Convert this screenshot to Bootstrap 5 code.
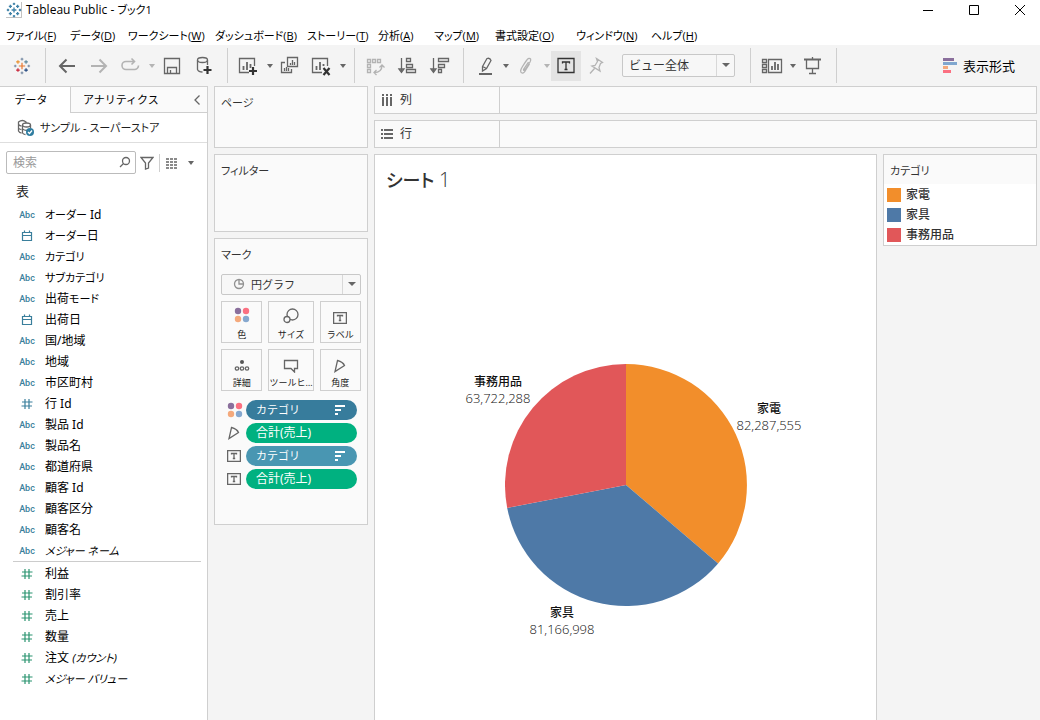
<!DOCTYPE html>
<html lang="ja">
<head>
<meta charset="utf-8">
<meta name="viewport" content="width=device-width, initial-scale=1">
<title>Tableau Public - ブック1</title>
<link href="https://cdn.jsdelivr.net/npm/bootstrap@5.3.0/dist/css/bootstrap.min.css" rel="stylesheet">
<style>
  body { font: 12px/18px "Noto Sans", "Noto Sans CJK JP", sans-serif; font-feature-settings: "palt"; color: #1e1e1e; background: #f4f4f4; }
  svg { display: block; flex: none; }
  .ic { fill: none; stroke: #666; stroke-width: 1.3; }
  .ic .solid { fill: #555; stroke: none; }
  .faded { opacity: .45; }
  button, .btn { font-size: 12px; line-height: 18px; }
  .plain { padding: 0; border: 0; border-radius: 0; background: none; color: inherit; }
  .kana, .plain.kana { font-size: 11px; }

  .titlebar { height: 20px; font-family: "Open Sans", "Noto Sans CJK JP", sans-serif; color: #000; padding-left: 6px; }
  .win-btns { gap: 14px; padding-right: 4px; }
  .menubar { display: grid; grid-template-columns: 64px 58px 87px 92px 71px 56px 61px 81px 75px auto; padding: 7px 0 0 6px; height: 25px; font-family: "Open Sans", "Noto Sans CJK JP", sans-serif; font-size: 11px; }
  .menubar a { color: #000; text-decoration: none; white-space: nowrap; }

  .toolbar { height: 41px; padding: 0 25px 0 6px; }
  .tool { width: 32px; height: 30px; display: flex; align-items: center; justify-content: center; }
  .tool.active-tool { width: 30px; background: #e4e4e4; }
  .active-tool .ic { stroke: #333; }
  .drop { width: 9px; height: 30px; display: flex; align-items: center; justify-content: center; }
  .drop::before, .pick::after { content: ""; border: 3px solid transparent; border-top: 4px solid #666; border-bottom: 0; }
  .vsep { width: 1px; height: 35px; background: #cfcfcf; margin: 0 5px 0 7px; }
  .fit { width: 113px; margin: 0 8px 0 9px; }
  .show-me { font-size: 13px; gap: 6px; }

  .pick { position: relative; }
  .pick::after { position: absolute; right: 5px; top: 9px; border-left-width: 4px; border-right-width: 4px; }
  .pick select { appearance: none; width: 100%; height: 23px; padding: 0 24px 0 6px; color: #333; border: 1px solid #c8c8c8; border-radius: 2px; background: linear-gradient(#d8d8d8, #d8d8d8) right 17px center / 1px 100% no-repeat #f7f7f7; font-size: 12px; line-height: 20px; }
  .pick.mark-pick select { height: 21px; padding-left: 29px; font-size: 11px; }
  .pick.mark-pick::after { top: 8px; }
  .pick svg { position: absolute; left: 12px; top: 4px; opacity: .7; }

  .data-pane { width: 208px; border: solid #cfcfcf; border-width: 1px 1px 0 0; background: #fff; }
  .pane-tabs { height: 26px; }
  .pane-tabs .tab-on { width: 70px; }
  .pane-tabs .tab-off { background: #fafafa; border: solid #cfcfcf; border-width: 0 0 1px 1px; padding: 0 6px 0 12px; }
  .source { height: 30px; padding: 0 17px; border-bottom: 1px solid #dedede; gap: 5px; }
  .search-row { margin: 8px 6px; height: 23px; }
  .search-box { width: 130px; position: relative; }
  .search-box input { height: 23px; min-height: 0; padding: 0 24px 0 6px; font-size: 12px; border: 1px solid #bbb; border-radius: 2px; }
  .search-box input::placeholder { color: #999; }
  .search-box svg { position: absolute; right: 5px; top: 5px; }
  .search-sep { width: 1px; height: 18px; background: #cfcfcf; margin: 0 6px 0 5px; }
  .table-name { font-size: 13px; padding: 0 16px; height: 22px; line-height: 18px; margin: 0; font-weight: 400; }
  .fields { margin: 0; padding: 0; list-style: none; color: #000; }
  .fields li { height: 21px; display: flex; align-items: center; }
  .fields li > :first-child { width: 26px; margin: 0 5px 0 14px; text-align: center; color: #3a7f9c; }
  .fields .abc { font: 500 9px/18px Roboto, sans-serif; }
  .fields.measures > li > :first-child { color: #2b9470; }
  .fields svg { stroke: currentColor; fill: none; stroke-width: 1.2; }
  .field-line { margin: 0 6px 1px 13px; border-top: 1px solid #ccc; opacity: 1; }

  .shelves { width: 154px; margin: 0 6px; gap: 6px; }
  .panel-box { background: #fafafa; border: 1px solid #cfcfcf; color: #333; }
  .shelf-box { padding: 7px 6px; font-size: 11px; }
  .h-pages { height: 62px; } .h-filters { height: 78px; } .h-marks { min-height: 287px; }
  .marks-title { margin-bottom: 10px; }
  .mark-grid { display: grid; grid-template-columns: repeat(3, 1fr); gap: 6px; margin: 6px 0 9px; }
  .mark-btn { height: 42px; border: 1px solid #cfcfcf; display: flex; flex-direction: column; align-items: center; justify-content: space-between; padding: 5px 0 0; font-size: 9px; line-height: 14px; white-space: nowrap; background: #fafafa; color: #222; border-radius: 0; }
  .pill-row { display: grid; grid-template-columns: 25px 1fr; align-items: center; height: 20px; margin: 0 4px 3px 0; }
  .pill-row > svg { margin-left: 6px; }
  .pill { height: 20px; border-radius: 10px; color: #fff; padding: 0 11px 0 10px; display: flex; align-items: center; justify-content: space-between; border: 0; line-height: 20px; }
  .pill.kana { font-size: 11px; }
  .pill-dark { background: #377c9c; } .pill-mid { background: #4996b2; } .pill-green { background: #00b180; }

  .work { gap: 6px; margin-right: 3px; }
  .axis-shelf { height: 28px; }
  .axis-name { width: 125px; border-right: 1px solid #cfcfcf; padding-left: 6px; gap: 7px; }
  .view-row { gap: 6px; }
  .sheet { background: #fff; border: 1px solid #cfcfcf; border-bottom: 0; }
  .sheet-title { font-size: 18px; line-height: 28px; font-weight: 500; margin: 11px 11px 170px; color: #333; }
  .sheet-title span { font: 300 20px/28px "Open Sans", sans-serif; }
  .pie { position: relative; width: 242px; margin: 0 auto; color: #111; }
  .pie-label { position: absolute; text-align: center; line-height: 17px; font-size: 12px; font-weight: 500; white-space: nowrap; }
  .pie-label span { display: block; font: 300 13px/17px "Open Sans", sans-serif; }
  .at-tv { left: 232px; top: 36px; } .at-furn { left: 25px; top: 240px; } .at-office { left: -39px; top: 9px; }
  .legend { width: 154px; }
  .legend h2 { font-size: 11px; line-height: 18px; font-weight: 400; margin: 0; padding: 7px 6px 5px; height: 29px; }
  .legend ul { background: #fff; margin: 0; padding: 1px 3px 0; list-style: none; }
  .legend li { height: 20px; display: flex; align-items: center; gap: 5px; font-weight: 500; }
  .swatch { width: 14px; height: 14px; }
  .sw-o { background: #f28e2b; } .sw-b { background: #4e79a7; } .sw-r { background: #e15759; }
</style>
<script src="https://cdn.jsdelivr.net/npm/bootstrap@5.3.0/dist/js/bootstrap.bundle.min.js"></script>
</head>
<body class="d-flex flex-column min-vh-100">
<svg width="0" height="0" class="position-absolute" aria-hidden="true">
  <symbol id="cal" viewBox="0 0 12 12"><path d="M1.500 2.500h9v8h-9zM1.500 5.500h9M3.500 .5v2M8.500 .5v2"/></symbol>
  <symbol id="num" viewBox="0 0 12 12"><path d="M4 1v10M8 1v10M1 4h10.500M.5 8h10.500"/></symbol>
  <symbol id="dots" viewBox="0 0 16 16"><g stroke="none"><circle cx="4" cy="4" r="3.200" fill="#8a6f9c"/><circle cx="12" cy="4" r="3.200" fill="#fb7081"/><circle cx="4" cy="12" r="3.200" fill="#f4a97c"/><circle cx="12" cy="12" r="3.200" fill="#86a8cf"/></g></symbol>
  <symbol id="tbox" viewBox="0 0 14 14"><path d="M.6 1.600h12.800v10.800H.6zM4.500 5.500v-1h5v1M7 4.500v5M5.800 9.500h2.400"/></symbol>
  <symbol id="angle" viewBox="0 0 14 14"><path d="M4.500 1.500Q10 3 11.500 6.500L2 12.500Z"/></symbol>
  <symbol id="sort" viewBox="0 0 12 12"><path d="M1 2h10M1 6h6M1 10h3" stroke="#fff" stroke-width="2"/></symbol>
  <symbol id="spark" viewBox="0 0 20 20"><path d="M10 7v6M7 10h6M5.500 3.500v4M3.500 5.500h4M14.500 3.500v4M12.500 5.500h4M5.500 12.500v4M3.500 14.500h4M14.500 12.500v4M12.500 14.500h4M10 .8v3M8.500 2.300h3M10 16.200v3M8.500 17.700h3M1 10h3M2.500 8.500v3M16 10h3M17.500 8.500v3"/></symbol>
</svg>

<header class="bg-white">
  <div class="titlebar d-flex align-items-center">
    <svg width="16" height="16" viewBox="0 0 20 20" fill="none" stroke="#3f82a8" stroke-width="1.700"><path d="M0 19.500h19.500V0" stroke="#aaa" stroke-width="1"/><use href="#spark"/></svg>
    <span class="ms-1">Tableau Public - <span class="kana">ブック1</span></span>
    <div class="win-btns d-flex ms-auto">
      <button class="plain tool" aria-label="最小化"><svg width="12" height="12" stroke="#000"><path d="M1 6.500h10"/></svg></button>
      <button class="plain tool" aria-label="最大化"><svg width="12" height="12" stroke="#000" fill="none"><path d="M1.500 1.500h9v9h-9z"/></svg></button>
      <button class="plain tool" aria-label="閉じる"><svg width="12" height="12" stroke="#000"><path d="M1 1l10 10M11 1 1 11"/></svg></button>
    </div>
  </div>
  <nav class="menubar">
    <a href="#">ファイル(<u>F</u>)</a><a href="#">データ(<u>D</u>)</a><a href="#">ワークシート(<u>W</u>)</a><a href="#">ダッシュボード(<u>B</u>)</a><a href="#">ストーリー(<u>T</u>)</a><a href="#">分析(<u>A</u>)</a><a href="#">マップ(<u>M</u>)</a><a href="#">書式設定(<u>O</u>)</a><a href="#">ウィンドウ(<u>N</u>)</a><a href="#">ヘルプ(<u>H</u>)</a>
  </nav>
</header>

<div class="toolbar d-flex align-items-center" role="toolbar" aria-label="ツールバー">
  <button class="plain tool" aria-label="スタート"><svg width="18" height="18" viewBox="0 0 20 20" fill="none" stroke-width="1.300"><path d="M10 6.500v7M6.500 10h7" stroke="#e8762d"/><path d="M5.500 3.500v4M3.500 5.500h4" stroke="#eb912c"/><path d="M14.500 3.500v4M12.500 5.500h4" stroke="#59879b"/><path d="M5.500 12.500v4M3.500 14.500h4" stroke="#c72035"/><path d="M14.500 12.500v4M12.500 14.500h4" stroke="#1f457e"/><path d="M10 .8v3M8.500 2.300h3M10 16.200v3M8.500 17.700h3M1 10h3M2.500 8.500v3M16 10h3M17.500 8.500v3" stroke="#7b8fa8"/></svg></button>
  <span class="vsep"></span>
  <button class="plain tool" aria-label="元に戻す"><svg class="ic" width="24" height="24"><path d="M20 12H5M11.500 5.500 5 12l6.500 6.500" stroke-width="2"/></svg></button>
  <button class="plain tool faded" aria-label="やり直す"><svg class="ic" width="24" height="24"><path d="M4 12h15M12.500 5.500 19 12l-6.500 6.500" stroke-width="2"/></svg></button>
  <button class="plain tool faded" aria-label="再生"><svg class="ic" width="24" height="24"><path d="M15 7.500H7a4 4 0 0 0 0 8h8a4 4 0 0 0 4.500-4M12.500 4.500l3 3-3 3" stroke-width="1.600"/></svg></button>
  <span class="drop faded"></span>
  <button class="plain tool" aria-label="保存"><svg class="ic" width="24" height="24"><path d="M4.500 4.500h15v15h-15zM7.500 19.500v-6h9v6M10.500 19v-3"/></svg></button>
  <button class="plain tool" aria-label="新しいデータ ソース"><svg class="ic" width="24" height="24"><ellipse cx="10.500" cy="6" rx="5" ry="2.500"/><path d="M5.500 6v9.500q1 2.500 5 2.500M15.500 6v5"/><path d="M15.500 12v8M11.500 16h8" stroke="#333" stroke-width="2.200"/></svg></button>
  <span class="vsep"></span>
  <button class="plain tool" aria-label="新しいワークシート"><svg class="ic" width="24" height="24"><path d="M12 18.500H2.500v-14h15V12"/><path d="M6.500 16v-4M10 16V8M13.500 14v-4" stroke-width="1.800"/><path d="M16 13v8M12 17h8" stroke="#333" stroke-width="2.200"/></svg></button>
  <span class="drop"></span>
  <button class="plain tool" aria-label="複製"><svg class="ic" width="24" height="24"><path d="M9.500 3.500h10v9h-10zM7 8.500H3.500v10h10V15M12.500 11V9M14.500 11V6M16.500 11V8M6.500 17v-3M8.500 17v-4M10.500 17v-3"/></svg></button>
  <button class="plain tool" aria-label="シートのクリア"><svg class="ic" width="24" height="24"><path d="M12 18.500H2.500v-14h15V12"/><path d="M6.500 16v-4M10 16V8M13.500 12v-2" stroke-width="1.800"/><path d="M13.500 14l6 7M19.500 14l-6 7" stroke="#333" stroke-width="2.200"/></svg></button>
  <span class="drop"></span>
  <span class="vsep"></span>
  <button class="plain tool faded" aria-label="行と列の交換"><svg class="ic" width="24" height="24"><path d="M3.500 5.500h3v3h-3zM8.500 5.500h3v3h-3zM13.500 5.500h3v3h-3zM3.500 10.500h3v3h-3zM3.500 15.500h3v3h-3zM10 18.500q8 0 8-7M12.500 16 10 18.500l2.500 2.500M15.500 13.500l2.500-2.500 2.500 2.500"/></svg></button>
  <button class="plain tool" aria-label="昇順"><svg class="ic" width="24" height="24"><path d="M5.500 4v13M3 15l2.500 3.500L8 15ZM10.500 4.500h4v3h-4zM10.500 10.500h6v3h-6zM10.500 15.500h9v3h-9z"/></svg></button>
  <button class="plain tool" aria-label="降順"><svg class="ic" width="24" height="24"><path d="M5.500 4v13M3 15l2.500 3.500L8 15ZM10.500 4.500h10v3h-10zM10.500 10.500h6v3h-6zM10.500 15.500h3v3h-3z"/></svg></button>
  <span class="vsep"></span>
  <button class="plain tool" aria-label="ハイライト"><svg class="ic" width="24" height="24"><path d="M9.500 12.500 14 4.500q3-1 4 2l-4.500 8-4 2.500ZM9.500 12.500l4 2"/><path d="M6 20h13" stroke-width="2"/></svg></button>
  <span class="drop"></span>
  <button class="plain tool faded" aria-label="グループ"><svg class="ic" width="24" height="24"><path d="M14.500 8 9.500 15.500q0 2 2-.5l4.500-7q2-4-1.500-3.500-1 0-6 8-3.500 5.500-.5 6.500 2 .5 4-3.500l3.500-5.500"/></svg></button>
  <span class="drop faded"></span>
  <button class="plain tool active-tool" aria-label="マーク ラベルを表示" aria-pressed="true"><svg class="ic" width="24" height="24"><path d="M4 4.500h16v14H4zM8.500 9.500V8h7v1.500M12 8v7.500M10.500 15.500h3" stroke-width="1.300"/></svg></button>
  <button class="plain tool faded" aria-label="固定"><svg class="ic" width="24" height="24"><path d="M11.500 4.500l6 4-2 1-1.500 4 1 3.500-8-5 3-.5 2.500-4ZM9.500 14.500 5 19.500"/></svg></button>
  <div class="pick fit"><select aria-label="サイズ調整"><option>ビュー全体</option></select></div>
  <span class="vsep"></span>
  <button class="plain tool" aria-label="カードの表示"><svg class="ic" width="24" height="24"><path d="M2.500 5.500h4v3h-4zM2.500 10.500h4v3h-4zM2.500 15.500h4v3h-4zM8.500 5.500h13v13h-13z"/><path d="M12 16v-4M15 16V8M18 16v-6" stroke-width="1.800"/></svg></button>
  <span class="drop"></span>
  <button class="plain tool" aria-label="プレゼンテーション モード"><svg class="ic" width="24" height="24"><path d="M5.500 6v8.500h12V6M11.500 14.500v5M8 19.500h7M11.500 3v2"/><path d="M3 5.500h17" stroke-width="2"/></svg></button>
  <span class="vsep"></span>
  <button class="plain show-me d-flex align-items-center ms-auto text-black"><svg width="14" height="16"><path fill="#8a6f9c" d="M0 0h11v3H0z"/><path fill="#80a7cf" d="M0 4h14v3H0z"/><path fill="#f4a97c" d="M0 8h5v3H0z"/><path fill="#fb7081" d="M0 12h8v3H0z"/></svg>表示形式</button>
</div>

<main class="d-flex flex-grow-1">
  <aside class="data-pane flex-shrink-0">
    <div class="pane-tabs d-flex">
      <button class="plain kana tab-on text-black pe-2">データ</button>
      <div class="tab-off d-flex flex-grow-1 align-items-center justify-content-between">
        <button class="plain kana text-black">アナリティクス</button>
        <button class="plain" aria-label="折りたたむ"><svg class="ic" width="8" height="12"><path d="M6.500 1.500 2 6l4.500 4.500"/></svg></button>
      </div>
    </div>
    <div class="source d-flex align-items-center">
      <svg class="ic" width="18" height="18"><path d="M9 4V3Q5.500 0 1.500 3v9q1 2 3 2M1.500 5.500q1.500 1.500 3 1.500M1.500 9q1 1.500 3 1.500"/><ellipse cx="9.500" cy="6" rx="4" ry="2"/><path d="M5.500 6v8q1 1.500 3 1.500M13.500 6v3M5.500 10q3 2 5 1"/><circle cx="13" cy="13" r="4" fill="#2f7da0" stroke="none"/><path d="M11 13l1.500 1.500 2.500-3" stroke="#fff"/></svg>
      <span class="kana">サンプル - スーパーストア</span>
    </div>
    <div class="search-row d-flex align-items-center">
      <div class="search-box"><input class="form-control" type="text" placeholder="検索" aria-label="検索"><svg class="ic" width="12" height="12"><circle cx="7" cy="5" r="3.500"/><path d="M4.500 7.500 1 11"/></svg></div>
      <button class="plain ms-1" aria-label="フィルター"><svg class="ic" width="14" height="14"><path d="M1 1.500h12L8.500 7v5l-3 1V7Z"/></svg></button>
      <span class="search-sep"></span>
      <button class="plain d-flex align-items-center" aria-label="表示"><svg width="12" height="12" stroke="#666" stroke-width="1.300" stroke-dasharray="3 1"><path d="M0 2h12M0 5h12M0 8h12M0 11h12"/></svg><span class="drop ms-2"></span></button>
    </div>
    <h2 class="table-name">表</h2>
    <ul class="fields">
      <li><span class="abc">Abc</span><span><span class="kana">オーダー</span> Id</span></li>
      <li><svg width="12" height="12"><use href="#cal"/></svg><span><span class="kana">オーダー</span>日</span></li>
      <li><span class="abc">Abc</span><span class="kana">カテゴリ</span></li>
      <li><span class="abc">Abc</span><span class="kana">サブカテゴリ</span></li>
      <li><span class="abc">Abc</span><span>出荷<span class="kana">モード</span></span></li>
      <li><svg width="12" height="12"><use href="#cal"/></svg>出荷日</li>
      <li><span class="abc">Abc</span>国/地域</li>
      <li><span class="abc">Abc</span>地域</li>
      <li><span class="abc">Abc</span>市区町村</li>
      <li><svg width="12" height="12"><use href="#num"/></svg>行 Id</li>
      <li><span class="abc">Abc</span>製品 Id</li>
      <li><span class="abc">Abc</span>製品名</li>
      <li><span class="abc">Abc</span>都道府県</li>
      <li><span class="abc">Abc</span>顧客 Id</li>
      <li><span class="abc">Abc</span>顧客区分</li>
      <li><span class="abc">Abc</span>顧客名</li>
      <li><span class="abc">Abc</span><i class="kana">メジャー ネーム</i></li>
    </ul>
    <hr class="field-line">
    <ul class="fields measures">
      <li><svg width="12" height="12"><use href="#num"/></svg>利益</li>
      <li><svg width="12" height="12"><use href="#num"/></svg>割引率</li>
      <li><svg width="12" height="12"><use href="#num"/></svg>売上</li>
      <li><svg width="12" height="12"><use href="#num"/></svg>数量</li>
      <li><svg width="12" height="12"><use href="#num"/></svg><span>注文 <i class="kana">(カウント)</i></span></li>
      <li><svg width="12" height="12"><use href="#num"/></svg><i class="kana">メジャー バリュー</i></li>
    </ul>
  </aside>

  <section class="shelves d-flex flex-column flex-shrink-0">
    <div class="panel-box shelf-box h-pages">ページ</div>
    <div class="panel-box shelf-box h-filters">フィルター</div>
    <div class="panel-box shelf-box h-marks">
      <div class="marks-title">マーク</div>
      <div class="pick mark-pick d-flex"><select aria-label="マーク タイプ"><option>円グラフ</option></select><svg class="ic" width="12" height="12"><circle cx="6" cy="6" r="4.500"/><path d="M6 2v4h4"/></svg></div>
      <div class="mark-grid">
        <button class="mark-btn"><svg width="16" height="16"><use href="#dots"/></svg>色</button>
        <button class="mark-btn"><svg class="ic" width="18" height="18"><circle cx="10.500" cy="7.500" r="5.500"/><circle cx="5" cy="12.500" r="3" fill="#fafafa"/></svg>サイズ</button>
        <button class="mark-btn"><svg class="ic mt-1" width="14" height="14"><use href="#tbox"/></svg>ラベル</button>
        <button class="mark-btn"><svg class="ic mt-1" width="16" height="14"><circle class="solid" cx="8" cy="3" r="2"/><circle cx="3" cy="9.500" r="1.700"/><circle cx="8" cy="9.500" r="1.700"/><circle cx="13" cy="9.500" r="1.700"/></svg>詳細</button>
        <button class="mark-btn"><svg class="ic mt-1" width="16" height="14"><path d="M1.500 1.500h13v8h-3v3.500L8 9.500H1.500Z"/></svg>ツールヒ…</button>
        <button class="mark-btn"><svg class="ic mt-1" width="14" height="14"><use href="#angle"/></svg>角度</button>
      </div>
      <div class="pill-row"><svg width="16" height="16"><use href="#dots"/></svg><button class="pill kana pill-dark">カテゴリ<svg width="12" height="12"><use href="#sort"/></svg></button></div>
      <div class="pill-row"><svg class="ic" width="14" height="14"><use href="#angle"/></svg><button class="pill pill-green">合計(売上)</button></div>
      <div class="pill-row"><svg class="ic" width="14" height="14"><use href="#tbox"/></svg><button class="pill kana pill-mid">カテゴリ<svg width="12" height="12"><use href="#sort"/></svg></button></div>
      <div class="pill-row"><svg class="ic" width="14" height="14"><use href="#tbox"/></svg><button class="pill pill-green">合計(売上)</button></div>
    </div>
  </section>

  <section class="work d-flex flex-column flex-grow-1">
    <div class="panel-box axis-shelf d-flex"><div class="axis-name d-flex align-items-center"><svg width="12" height="12" fill="#666"><path d="M1 0h2v2H1zM5 0h2v2H5zM9 0h2v2H9zM1 3h2v9H1zM5 3h2v9H5zM9 3h2v9H9z"/></svg>列</div></div>
    <div class="panel-box axis-shelf d-flex"><div class="axis-name d-flex align-items-center"><svg width="12" height="12" fill="#666"><path d="M0 1h2v2H0zM0 5h2v2H0zM0 9h2v2H0zM3 1h9v2H3zM3 5h9v2H3zM3 9h9v2H3z"/></svg>行</div></div>
    <div class="view-row d-flex flex-grow-1 align-items-start">
      <div class="sheet flex-grow-1 align-self-stretch">
        <h1 class="sheet-title">シート <span>1</span></h1>
        <div class="pie">
          <svg width="242" height="242" viewBox="-121 -121 242 242" role="img" aria-label="カテゴリ別の売上">
            <path fill="#f28e2b" d="M0 0V-121A121 121 0 0 1 92.100 78.400Z"/>
            <path fill="#4e79a7" d="M0 0 92.100 78.400A121 121 0 0 1-118.800 23Z"/>
            <path fill="#e15759" d="M0 0-118.800 23A121 121 0 0 1 0-121Z"/>
          </svg>
          <div class="pie-label at-tv">家電<span>82,287,555</span></div>
          <div class="pie-label at-furn">家具<span>81,166,998</span></div>
          <div class="pie-label at-office">事務用品<span>63,722,288</span></div>
        </div>
      </div>
      <div class="legend panel-box flex-shrink-0">
        <h2>カテゴリ</h2>
        <ul>
          <li><span class="swatch sw-o"></span>家電</li>
          <li><span class="swatch sw-b"></span>家具</li>
          <li><span class="swatch sw-r"></span>事務用品</li>
        </ul>
      </div>
    </div>
  </section>
</main>
</body>
</html>
